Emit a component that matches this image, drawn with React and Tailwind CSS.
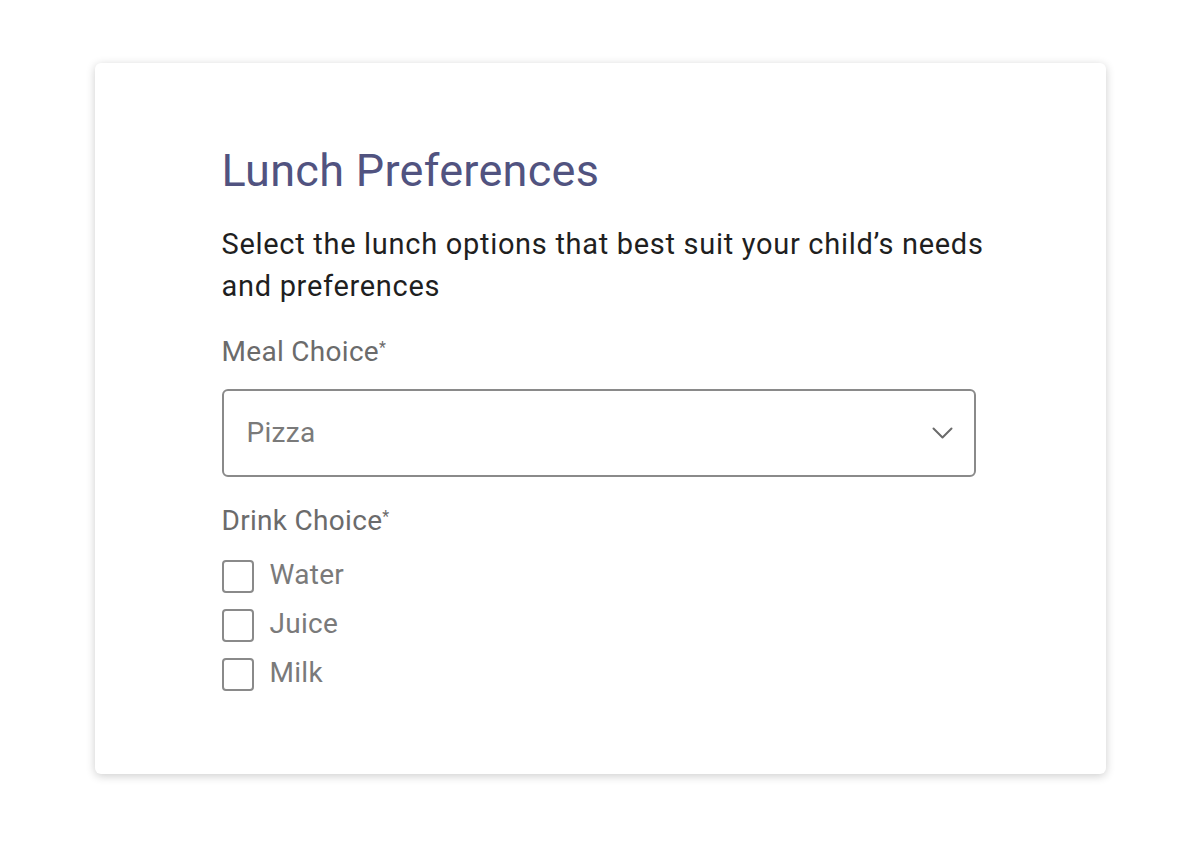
import React from 'react';

export default function App() {
  const drinks = ['Water', 'Juice', 'Milk'];

  return (
    <div className="min-h-screen bg-white pt-[63px]" style={{ fontFamily: 'Roboto, "Noto Sans", sans-serif' }}>
      {/* Card */}
      <div className="mx-auto h-[711px] w-[1011px] rounded-md bg-white pl-[127px] pt-[80px] shadow-[0_2px_10px_rgba(0,0,0,0.2)]">
        <div className="w-[754px]">
          <h1 className="text-[45px] leading-[56px] font-normal tracking-[0.3px] text-[#515380]">Lunch Preferences</h1>
          <p className="mt-[24px] w-[775px] text-[29px] leading-[42px] tracking-[0.7px] text-[#1f1f1f]">
            Select the lunch options that best suit your child’s needs and preferences
          </p>

          {/* Meal */}
          <div className="mt-[25px] text-[28px] leading-[40px] tracking-[0.3px] text-[#6b6b6b]">
            Meal Choice<sup className="text-[16px]">*</sup>
          </div>
          <div className="mt-[17px] flex h-[88px] items-center justify-between rounded-md border-2 border-[#8a8a8a] pl-[23px] pr-[21px]">
            <span className="text-[28px] tracking-[0.3px] text-[#7a7a7a]">Pizza</span>
            <svg width="21" height="12" viewBox="0 0 21 12" fill="none" stroke="#6b6b6b" strokeWidth="2" strokeLinecap="round" strokeLinejoin="round">
              <path d="M1.5 1.5l9 9 9-9" />
            </svg>
          </div>

          {/* Drink */}
          <div className="mt-[24px] text-[28px] leading-[40px] tracking-[0.3px] text-[#6b6b6b]">
            Drink Choice<sup className="text-[16px]">*</sup>
          </div>
          <div className="mt-[19px] flex flex-col gap-[16px]">
            {drinks.map((d) => (
              <label key={d} className="flex h-[33px] items-center gap-[16px]">
                <span className="h-[33px] w-[32px] rounded-[4px] border-2 border-[#8a8a8a]" />
                <span className="-mt-[4px] text-[28px] tracking-[0.3px] text-[#7a7a7a]">{d}</span>
              </label>
            ))}
          </div>
        </div>
      </div>
    </div>
  );
}
